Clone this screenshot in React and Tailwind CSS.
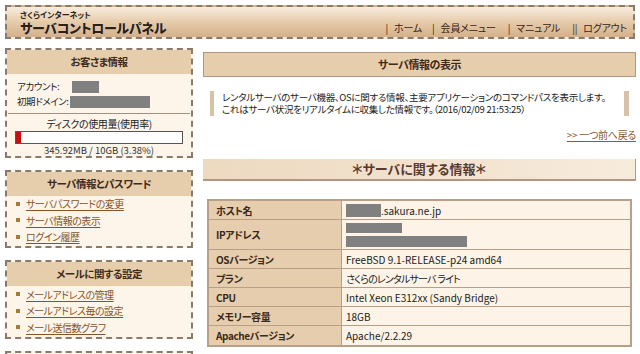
import React from 'react'

const jp = "font-['Noto_Sans_CJK_JP','Noto_Sans',sans-serif]"

const menus = [
  {
    title: 'サーバ情報とパスワード',
    links: ['サーバパスワードの変更', 'サーバ情報の表示', 'ログイン履歴'],
  },
  {
    title: 'メールに関する設定',
    links: ['メールアドレスの管理', 'メールアドレス毎の設定', 'メール送信数グラフ'],
  },
]

const rows = [
  { label: 'OSバージョン', value: 'FreeBSD 9.1-RELEASE-p24 amd64' },
  { label: 'プラン', value: 'さくらのレンタルサーバ ライト', jp: true },
  { label: 'CPU', value: 'Intel Xeon E312xx (Sandy Bridge)' },
  { label: 'メモリー容量', value: '18GB' },
  { label: 'Apacheバージョン', value: 'Apache/2.2.29' },
]

function SideBox({ title, children }) {
  return (
    <div className="border-2 border-dashed border-[#8a7a6a] bg-[#fdf5ea]">
      <div className="h-[24px] bg-[#e6cdab] flex items-center justify-center text-[10.5px] font-bold tracking-[-0.05em] text-[#3f2a1c]">
        {title}
      </div>
      {children}
    </div>
  )
}

function Redacted({ w, h = 12 }) {
  return <span className="inline-block shrink-0 bg-[#808080] align-middle" style={{ width: w, height: h }} />
}

function Row({ label, children, h = 19 }) {
  return (
    <div className="flex border-b border-[#b8a088] last:border-b-0" style={{ height: h }}>
      <div className="w-[133px] shrink-0 bg-[#e6cdae] border-r border-[#b8a088] pl-[7px] flex items-center text-[10px] font-bold tracking-[-0.04em] text-[#3a2a1a]">
        {label}
      </div>
      <div className="flex-1 bg-[#fdf3e6] pl-[4px] flex items-center text-[10px] text-[#222] whitespace-nowrap">
        {children}
      </div>
    </div>
  )
}

export default function App() {
  return (
    <div className={`w-[640px] h-[354px] overflow-hidden bg-white ${jp} [font-feature-settings:'palt']`}>
      {/* header */}
      <div className="mx-[5px] mt-[5px] h-[34px] border-2 border-dashed border-[#8a7a6a] bg-gradient-to-b from-[#f8ecdf] via-[#e6cbaa] to-[#d4b08a] flex items-end justify-between pl-[13px] pr-[6px] pb-[2px]">
        <div className="flex flex-col text-[#2e1f14]">
          <span className="text-[8px] leading-[8px] font-bold mb-[2px]">さくらインターネット</span>
          <span className="text-[13px] leading-[14px] font-black tracking-tight [text-shadow:0_0_1px_#fff]">サーバコントロールパネル</span>
        </div>
        <div className="flex items-center text-[10px] tracking-[-0.02em] text-[#3a2414] leading-none pb-[2px]">
          <span className="mr-[6px]">|</span>
          <span>ホーム</span>
          <span className="ml-[10px] mr-[6px]">|</span>
          <span>会員メニュー</span>
          <span className="ml-[12px] mr-[6px]">|</span>
          <span>マニュアル</span>
          <span className="ml-[12px] mr-[6px]">||</span>
          <span>ログアウト</span>
        </div>
      </div>

      <div className="flex mt-[9px]">
        {/* sidebar */}
        <div className="w-[188px] ml-[5px] shrink-0 flex flex-col gap-[12px]">
          <SideBox title="お客さま情報">
            <div className="px-[10px] pt-[5px] text-[9.5px] tracking-[-0.04em] text-[#222] leading-none whitespace-nowrap">
              <div className="flex items-center h-[15px]">
                <span className="w-[55px]">アカウント:</span>
                <Redacted w={27} />
              </div>
              <div className="flex items-center h-[15px]">
                <span className="w-[53px]">初期ドメイン:</span>
                <Redacted w={80} />
              </div>
            </div>
            <div className="mx-[1px] mt-[4px] border-t border-[#a09080]" />
            <div className="text-center text-[10px] tracking-[-0.04em] text-[#222] mt-[5px] leading-none">ディスクの使用量(使用率)</div>
            <div className="mx-[8px] mt-[2px] h-[13px] border border-[#555] bg-white flex">
              <div className="w-[5px] bg-[#c41010]" />
            </div>
            <div className="text-center text-[9.5px] text-[#333] mt-[2px] leading-none">345.92MB / 10GB (3.38%)</div>
          </SideBox>

          {menus.map(m => (
            <SideBox key={m.title} title={m.title}>
              <div className="pl-[9px] pb-[1px]">
                {m.links.map(l => (
                  <div key={l} className="flex items-center h-[16.5px] text-[10px] tracking-[-0.05em]">
                    <span className="w-[4px] h-[4px] bg-[#a87a3a] mr-[6px]" />
                    <span className="text-[#85542a] underline underline-offset-2">{l}</span>
                  </div>
                ))}
              </div>
            </SideBox>
          ))}
          <div className="border-2 border-dashed border-[#8a7a6a] bg-[#fdf5ea] h-[20px]" />
        </div>

        {/* main */}
        <div className="flex-1 ml-[10px] mr-[4px]">
          <div className="mt-[4px] h-[25px] bg-[#e6cdab] border border-[#b09880] flex items-center justify-center text-[11px] font-bold tracking-[-0.04em] text-[#3f2a1c]">
            サーバ情報の表示
          </div>

          <div className="mt-[14px] mx-[7px] flex justify-between">
            <div className="flex">
              <div className="w-[4px] bg-[#d6c2a6]" />
              <div className="pl-[8px] text-[9.5px] tracking-[-0.03em] text-[#222] py-[1px] whitespace-nowrap flex flex-col gap-[1px]">
                <div className="leading-[11px]">レンタルサーバのサーバ機器、OSに関する情報、主要アプリケーションのコマンドパスを表示します。</div>
                <div className="leading-[11px]">これはサーバ状況をリアルタイムに収集した情報です。（2016/02/09 21:53:25）</div>
              </div>
            </div>
            <div className="w-[5px] bg-[#d6c2a6]" />
          </div>

          <div className="mt-[14px] text-right text-[10px] tracking-[-0.03em] text-[#8a5a30] underline underline-offset-2 leading-none">
            &gt;&gt; 一つ前へ戻る
          </div>

          <div className="mt-[19px] h-[22px] bg-gradient-to-r from-[#edd9c0] to-[#f7ebdc] border-b-2 border-r border-[#b09880] flex items-center justify-center text-[13px] font-bold text-[#5a3a2e]">
            ＊サーバに関する情報＊
          </div>

          <div className="mt-[18px] mx-[4px] border-2 border-[#b8a088]">
            <Row label="ホスト名">
              <Redacted w={35} h={13} />
              <span>.sakura.ne.jp</span>
            </Row>
            <Row label="IPアドレス" h={30}>
              <div className="flex flex-col gap-[3px]">
                <Redacted w={56} h={10} />
                <Redacted w={121} h={11} />
              </div>
            </Row>
            {rows.map(r => (
              <Row key={r.label} label={r.label}>
                <span className={r.jp ? 'tracking-[-0.08em]' : ''}>{r.value}</span>
              </Row>
            ))}
          </div>
        </div>
      </div>
    </div>
  )
}
